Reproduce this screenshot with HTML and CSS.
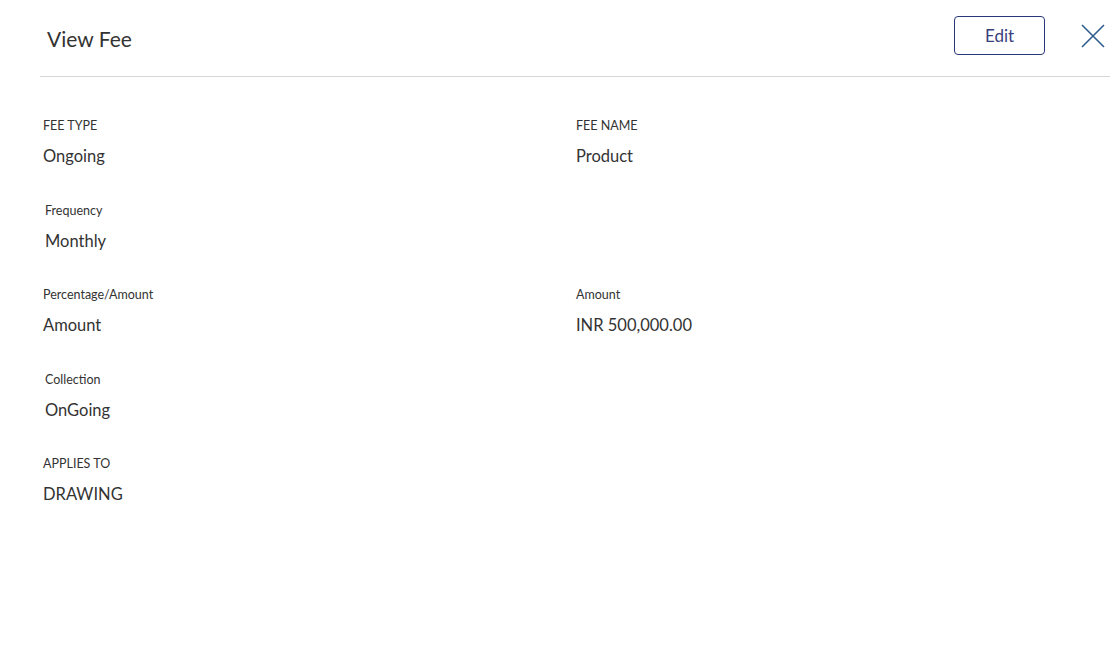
FILE: index.html
```html
<!DOCTYPE html>
<html lang="en">
<head>
    <meta charset="UTF-8">
    <title>View Fee</title>
    <link rel="stylesheet" href="styles.css">
</head>
<body>
    <div class="panel">
        <header class="panel-header">
            <h1>View Fee</h1>
            <div class="actions">
                <button class="edit-btn">Edit</button>
                <button class="close-btn" aria-label="Close">
                    <svg width="24" height="24" viewBox="0 0 24 24">
                        <path d="M1 1 L23 23 M23 1 L1 23" stroke="#2d5d8c" stroke-width="1.6" fill="none"/>
                    </svg>
                </button>
            </div>
        </header>

        <!-- fee details -->
        <div class="details">
            <div class="field">
                <div class="label">FEE TYPE</div>
                <div class="value">Ongoing</div>
            </div>
            <div class="field">
                <div class="label">FEE NAME</div>
                <div class="value">Product</div>
            </div>
            <div class="field indent">
                <div class="label">Frequency</div>
                <div class="value">Monthly</div>
            </div>
            <div class="field"></div>
            <div class="field">
                <div class="label">Percentage/Amount</div>
                <div class="value">Amount</div>
            </div>
            <div class="field">
                <div class="label">Amount</div>
                <div class="value">INR 500,000.00</div>
            </div>
            <div class="field indent">
                <div class="label">Collection</div>
                <div class="value">OnGoing</div>
            </div>
            <div class="field"></div>
            <div class="field">
                <div class="label">APPLIES TO</div>
                <div class="value">DRAWING</div>
            </div>
        </div>
    </div>
</body>
</html>
```

FILE: styles.css
```css
body {
    margin: 0;
    padding: 0;
    background: #ffffff;
    font-family: Lato, "Open Sans", sans-serif;
    color: #333;
}

.panel {
    padding: 0 8px 0 40px;
}

.panel-header {
    display: flex;
    justify-content: space-between;
    align-items: flex-start;
    height: 76px;
    border-bottom: 1px solid #d6d6d6;
}

.panel-header h1 {
    margin: 26px 0 0 7px;
    font-size: 21px;
    font-weight: normal;
    color: #333;
}

.actions {
    display: flex;
    align-items: center;
    margin-top: 16px;
    padding-right: 5px;
}

.edit-btn {
    width: 91px;
    height: 39px;
    background: #fff;
    border: 1px solid #283777;
    border-radius: 4px;
    color: #3b3f7c;
    font-family: Lato, "Open Sans", sans-serif;
    font-size: 17px;
    cursor: pointer;
}

.close-btn {
    margin-left: 36px;
    padding: 0;
    background: none;
    border: none;
    width: 24px;
    height: 24px;
    cursor: pointer;
}

.details {
    display: grid;
    grid-template-columns: 533px 1fr;
    grid-auto-rows: 84.5px;
    padding: 41px 0 0 3px;
}

.field.indent {
    padding-left: 2px;
}

.label {
    font-size: 12.5px;
    color: #333;
    height: 17px;
}

.value {
    margin-top: 11px;
    font-size: 16.5px;
    color: #333;
}
```
